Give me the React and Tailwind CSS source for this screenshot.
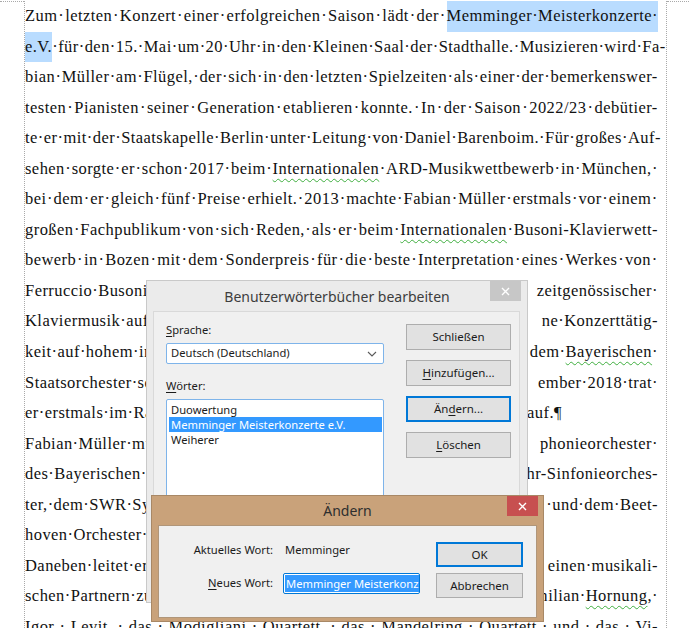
import React from "react";

const fullLines = [
  "Zum letzten Konzert einer erfolgreichen Saison lädt der {Memminger·Meisterkonzerte·}",
  "{e.V.} für den 15. Mai um 20 Uhr in den Kleinen Saal der Stadthalle. Musizieren wird Fa-",
  "bian Müller am Flügel, der sich in den letzten Spielzeiten als einer der bemerkenswer-",
  "testen Pianisten seiner Generation etablieren konnte. In der Saison 2022/23 debütier-",
  "te er mit der Staatskapelle Berlin unter Leitung von Daniel Barenboim. Für großes Auf-",
  "sehen sorgte er schon 2017 beim ~Internationalen~ ARD-Musikwettbewerb in München, ",
  "bei dem er gleich fünf Preise erhielt. 2013 machte Fabian Müller erstmals vor einem ",
  "großen Fachpublikum von sich Reden, als er beim ~Internationalen~ Busoni-Klavierwett-",
  "bewerb in Bozen mit dem Sonderpreis für die beste Interpretation eines Werkes von ",
];

// lines partly hidden behind the dialogs: left part, hidden middle, right part
const splitLines = [
  { l: "Ferruccio Busoni", m: " ausgezeichnet wurde. Als engagierter Interpret ", r: "zeitgenössischer " },
  { l: "Klaviermusik auf", m: " und entfaltet seitdem ei", r: "ne Konzerttätig-" },
  { l: "keit auf hohem in", m: "ternationalem Niveau, etwa mit", r: " dem ~Bayerischen~ " },
  { l: "Staatsorchester s", m: "owie den Münchner Philharmonikern. Im Dez", r: "ember 2018 trat " },
  { l: "er erstmals im R", m: "ahmen des Klavier-Festivals Ruhr ", r: "auf.¶", w: "w-[537px]" },
  { l: "Fabian Müller m", m: "usizierte außerdem mit dem Sym", r: "phonieorchester " },
  { l: "des Bayerischen ", m: "Rundfunks, dem Deutschen Symphonie-Orchester, dem ", r: "hr-Sinfonieorches-" },
  { l: "ter, dem SWR Sy", m: "mphonieorchester, dem Mozarteumorchester", r: " und dem Beet-" },
  { plain: "hoven Orchester Bonn.¶" },
  { l: "Daneben leitet e", m: "r vom Flügel aus und widmet sich mit s", r: "einen musikali-" },
  { l: "schen Partnern z", m: "u denen unter anderem Maxi", r: "milian ~Hornung~, " },
];

const lastLine =
  "Igor Levit, das Modigliani Quartett, das Mandelring Quartett und das Vi-";

const squiggle =
  "underline decoration-wavy decoration-[#3fae3f] decoration-1 underline-offset-[4px]";

function Inline({ s }) {
  const parts = s.split(/(~[^~]+~)/);
  return parts.map((p, i) =>
    p.startsWith("~") ? (
      <span key={i} className={squiggle}>
        {p.slice(1, -1).replaceAll(" ", "·")}
      </span>
    ) : (
      <span key={i}>{p.replaceAll(" ", "·")}</span>
    )
  );
}

function Word({ t }) {
  if (t.startsWith("{")) {
    return <span className="bg-[#b9dcff]">{t.slice(1, -1)}</span>;
  }
  const m = t.match(/^~(.+)~(.*)$/);
  if (m) {
    return (
      <span>
        <span className={squiggle}>{m[1]}</span>
        {m[2]}
      </span>
    );
  }
  return <span>{t}</span>;
}

function JustifiedLine({ text }) {
  const parts = text.split(" ");
  const items = [];
  parts.forEach((p, i) => {
    if (p !== "") items.push(<Word key={"w" + i} t={p} />);
    if (i < parts.length - 1) items.push(<span key={"d" + i}>·</span>);
  });
  return (
    <div className="flex h-[30.55px] justify-between whitespace-nowrap leading-[30.55px]">
      {items}
    </div>
  );
}

function SplitLine({ line }) {
  if (line.plain) {
    return (
      <div className="h-[30.55px] whitespace-nowrap leading-[30.55px]">
        <Inline s={line.plain} />
      </div>
    );
  }
  return (
    <div className={`flex h-[30.55px] whitespace-nowrap leading-[30.55px] ${line.w || ""}`}>
      <span>
        <Inline s={line.l} />
      </span>
      <span className="min-w-0 flex-1 overflow-hidden">
        <Inline s={line.m} />
      </span>
      <span>
        <Inline s={line.r} />
      </span>
    </div>
  );
}

function CloseIcon() {
  return (
    <svg width="9" height="9" viewBox="0 0 9 9">
      <path d="M1 1 L8 8 M8 1 L1 8" stroke="white" strokeWidth="1.4" />
    </svg>
  );
}

function Button({ children, focused }) {
  return (
    <div
      className={`flex items-center justify-center bg-[#e1e1e1] text-[11.5px] text-[#1b1b1b] ${
        focused ? "border-2 border-[#0078d7]" : "border border-[#adadad]"
      }`}
    >
      {children}
    </div>
  );
}

function DictionaryDialog() {
  return (
    <div className="absolute left-[146px] top-[280px] flex h-[323px] w-[382px] flex-col border border-[#c9c9c9] bg-[#ebebeb] font-['Noto_Sans',sans-serif]">
      <div className="relative flex h-[30px] items-center justify-center text-[14px] text-[#3d3d3d]">
        Benutzerwörterbücher bearbeiten
        <div className="absolute right-[6px] top-0 flex h-[20px] w-[31px] items-center justify-center bg-[#c7c7c7]">
          <CloseIcon />
        </div>
      </div>
      <div className="mb-[5px] ml-[6px] mr-[7px] flex flex-1 border border-[#d9d9d9] bg-[#f0f0f0] pl-[12px] text-[11.2px] text-[#1b1b1b]">
        <div className="flex w-[218px] flex-col pt-[10px]">
          <div className="leading-[16px]">
            <span className="underline underline-offset-2">S</span>prache:
          </div>
          <div className="mt-[5px] flex h-[21px] items-center justify-between rounded-[2px] border border-[#7eb4ea] bg-white pl-[4px] pr-[6px]">
            <span>Deutsch (Deutschland)</span>
            <svg width="10" height="6" viewBox="0 0 10 6">
              <path d="M1 1 L5 5 L9 1" fill="none" stroke="#5a5a5a" strokeWidth="1.1" />
            </svg>
          </div>
          <div className="mt-[14px] leading-[16px]">
            <span className="underline underline-offset-2">W</span>örter:
          </div>
          <div className="mt-[5px] h-[182px] rounded-[2px] border border-[#7eb4ea] bg-white pl-[2px] pr-[1px] pt-[2px]">
            <div className="h-[15px] px-[2px] leading-[15px]">Duowertung</div>
            <div className="h-[15px] bg-[#3399ff] px-[2px] leading-[15px] text-white">
              Memminger Meisterkonzerte e.V.
            </div>
            <div className="h-[15px] px-[2px] leading-[15px]">Weiherer</div>
          </div>
        </div>
        <div className="ml-[22px] flex w-[105px] flex-col gap-[10px] pt-[12px] [&>div]:h-[26px]">
          <Button>Schließen</Button>
          <Button>
            <span>
              <span className="underline underline-offset-2">H</span>inzufügen...
            </span>
          </Button>
          <Button focused>
            <span>
              Än<span className="underline underline-offset-2">d</span>ern...
            </span>
          </Button>
          <Button>
            <span>
              <span className="underline underline-offset-2">L</span>öschen
            </span>
          </Button>
        </div>
      </div>
    </div>
  );
}

function ChangeDialog() {
  return (
    <div className="absolute left-[151px] top-[495px] flex h-[127px] w-[393px] flex-col border border-[#a88866] bg-[#c9a27a] font-['Noto_Sans',sans-serif]">
      <div className="relative flex h-[29px] items-center justify-center text-[14px] text-[#2e2e2e]">
        Ändern
        <div className="absolute right-[5px] top-0 flex h-[20px] w-[31px] items-center justify-center bg-[#c75050]">
          <CloseIcon />
        </div>
      </div>
      <div className="mb-[3px] ml-[6px] mr-[6px] flex flex-1 border border-[#b0967a] bg-[#f0f0f0] pt-[16px] text-[11.2px] text-[#1b1b1b]">
        <div className="flex flex-col">
          <div className="flex h-[16px] items-center leading-[16px]">
            <span className="w-[114px] text-right">Aktuelles Wort:</span>
            <span className="ml-[12px]">Memminger</span>
          </div>
          <div className="mt-[15px] flex h-[21px] items-center">
            <span className="w-[114px] text-right">
              <span className="underline underline-offset-2">N</span>eues Wort:
            </span>
            <div className="ml-[10px] flex h-[21px] w-[137px] items-center overflow-hidden whitespace-nowrap rounded-[2px] border border-[#0078d7] bg-white px-[1px]">
              <span className="bg-[#3399ff] pl-[1px] leading-[17px] text-white">
                Memminger Meisterkonzerte e.V.
              </span>
            </div>
          </div>
        </div>
        <div className="ml-[16px] flex w-[87px] flex-col gap-[6px] [&>div]:h-[25px]">
          <Button focused>OK</Button>
          <Button>Abbrechen</Button>
        </div>
      </div>
    </div>
  );
}

export default function App() {
  return (
    <div className="relative h-[628px] w-[689px] overflow-hidden bg-white">
      <div className="flex pt-px">
        <div className="w-[24px] self-start border-t border-dotted border-[#a9a9a9]" />
        <div className="w-[643px] border-l border-r border-dotted border-[#a9a9a9] pr-[8px] font-['Liberation_Serif',serif] text-[16.5px] tracking-[0.45px] text-[#111]">
          {fullLines.map((t, i) => (
            <JustifiedLine key={i} text={t} />
          ))}
          {splitLines.map((l, i) => (
            <SplitLine key={i} line={l} />
          ))}
          <JustifiedLine text={lastLine} />
          <div className="h-[40px]" />
        </div>
        <div className="flex-1 self-start border-t border-dotted border-[#a9a9a9]" />
      </div>
      <DictionaryDialog />
      <ChangeDialog />
    </div>
  );
}
